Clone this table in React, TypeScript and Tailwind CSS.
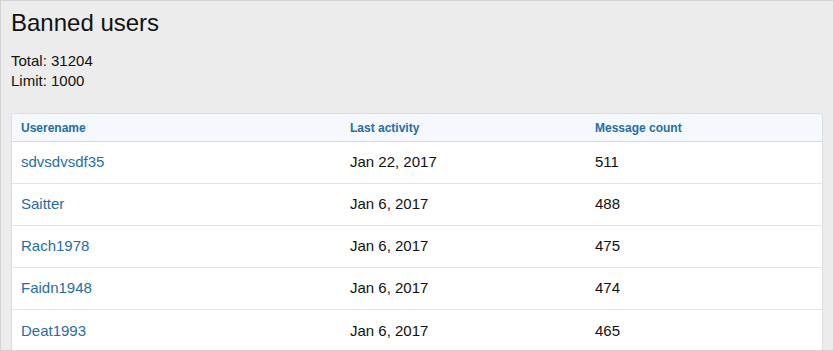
import React from "react";

const rows = [
  { name: "sdvsdvsdf35", date: "Jan 22, 2017", count: "511" },
  { name: "Saitter", date: "Jan 6, 2017", count: "488" },
  { name: "Rach1978", date: "Jan 6, 2017", count: "475" },
  { name: "Faidn1948", date: "Jan 6, 2017", count: "474" },
  { name: "Deat1993", date: "Jan 6, 2017", count: "465" },
];

export default function App() {
  return (
    <div
      className="w-[834px] h-[351px] overflow-hidden border border-[#d3d3d3] bg-[#ececec] pl-[10px] pr-[10px] text-[#111]"
      style={{ fontFamily: '"Liberation Sans", Arial, sans-serif' }}
    >
      <h1 className="mt-[8px] text-[24px] leading-[28px] text-[#111]">Banned users</h1>
      <div className="mt-[14px] text-[15px] leading-[20px]">
        <div>Total: 31204</div>
        <div>Limit: 1000</div>
      </div>
      <div className="mt-[22px] rounded-t-[4px] border border-[#d9dde2] bg-white">
        <div className="grid grid-cols-[329px_245px_1fr] h-[28px] items-center rounded-t-[4px] border-b border-[#d6d9dc] bg-[#f5f9fd] text-[12px] font-bold text-[#1f6ea6]">
          <div className="pl-[9px]">Userename</div>
          <div className="pl-[9px]">Last activity</div>
          <div className="pl-[9px]">Message count</div>
        </div>
        {rows.map((r, i) => (
          <div
            key={r.name}
            className={
              "grid grid-cols-[329px_245px_1fr] h-[42px] items-center text-[15px] " +
              (i < rows.length - 1 ? "border-b border-[#e4e4e4]" : "")
            }
          >
            <div className="pl-[9px] text-[#1f6ea6]">{r.name}</div>
            <div className="pl-[9px] text-[#111]">{r.date}</div>
            <div className="pl-[9px] text-[#111]">{r.count}</div>
          </div>
        ))}
      </div>
    </div>
  );
}
